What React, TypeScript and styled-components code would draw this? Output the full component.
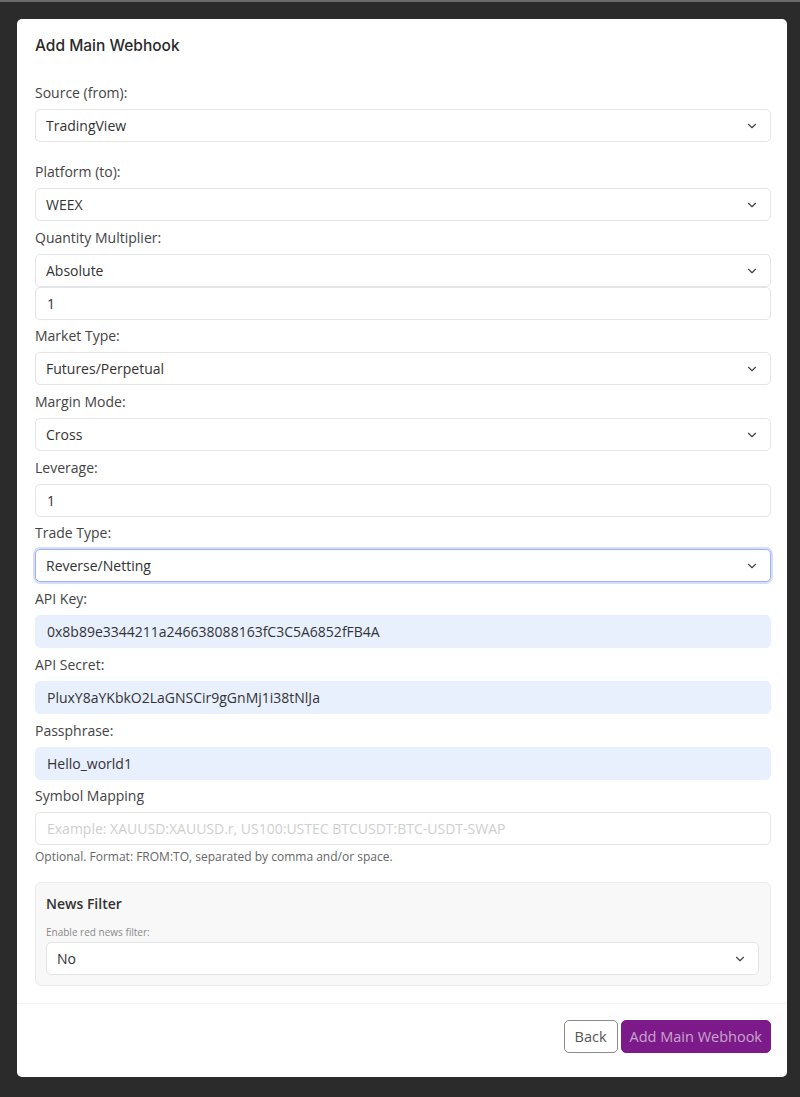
import React from 'react';
import styled, { createGlobalStyle, css } from 'styled-components';
import { ChevronDown } from 'lucide-react';

const GlobalStyle = createGlobalStyle`
    * {
        box-sizing: border-box;
    }

    body {
        margin: 0;
        background: #2b2b2b;
        font-family: "Open Sans", "Liberation Sans", sans-serif;
    }
`;

type Field = {
    label: string;
    kind: 'select' | 'input';
    value?: string;
    autofill?: boolean;
    focused?: boolean;
    extra?: string;
    spaced?: boolean;
};

const fields: Field[] = [
    { label: 'Source (from):', kind: 'select', value: 'TradingView', spaced: true },
    { label: 'Platform (to):', kind: 'select', value: 'WEEX' },
    { label: 'Quantity Multiplier:', kind: 'select', value: 'Absolute', extra: '1' },
    { label: 'Market Type:', kind: 'select', value: 'Futures/Perpetual' },
    { label: 'Margin Mode:', kind: 'select', value: 'Cross' },
    { label: 'Leverage:', kind: 'input', value: '1' },
    { label: 'Trade Type:', kind: 'select', value: 'Reverse/Netting', focused: true },
    { label: 'API Key:', kind: 'input', value: '0x8b89e3344211a246638088163fC3C5A6852fFB4A', autofill: true },
    { label: 'API Secret:', kind: 'input', value: 'PluxY8aYKbkO2LaGNSCir9gGnMj1i38tNlJa', autofill: true },
    { label: 'Passphrase:', kind: 'input', value: 'Hello_world1', autofill: true },
];

const SelectBox: React.FC<{ value: string; focused?: boolean }> = ({ value, focused }) => (
    <SelectWrap>
        <Select defaultValue={value} $focused={focused}>
            <option>{value}</option>
        </Select>
        <Chevron size={14} strokeWidth={2} />
    </SelectWrap>
);

const App: React.FC = () => {
    return (
        <Page>
            <GlobalStyle />
            <Card>
                <Header>
                    <Title>Add Main Webhook</Title>
                </Header>
                <Body>
                    {fields.map((f) => (
                        <Group key={f.label} $spaced={f.spaced}>
                            <Label>{f.label}</Label>
                            {f.kind === 'select' ? (
                                <SelectBox value={f.value || ''} focused={f.focused} />
                            ) : (
                                <Input defaultValue={f.value} $autofill={f.autofill} />
                            )}
                            {f.extra && <Input defaultValue={f.extra} />}
                        </Group>
                    ))}
                    <Group>
                        <Label>Symbol Mapping</Label>
                        <Input placeholder="Example: XAUUSD:XAUUSD.r, US100:USTEC BTCUSDT:BTC-USDT-SWAP" />
                        <Help>Optional. Format: FROM:TO, separated by comma and/or space.</Help>
                    </Group>
                    <FilterBox>
                        <FilterTitle>News Filter</FilterTitle>
                        <SmallLabel>Enable red news filter:</SmallLabel>
                        <SelectBox value="No" />
                    </FilterBox>
                </Body>
                <Footer>
                    <Button>Back</Button>
                    <Button $primary>Add Main Webhook</Button>
                </Footer>
            </Card>
        </Page>
    );
};

const Page = styled.div`
    min-height: 1097px;
    border-top: 2px solid #6b6b6b;
    padding: 17px 13px 19px 17px;
`;

const Card = styled.div`
    width: 770px;
    background: #fff;
    border-radius: 5px;
    overflow: hidden;
`;

const Header = styled.div`
    padding: 16px 18px 12px;
`;

const Title = styled.h5`
    margin: 0;
    font-family: Inter, "Open Sans", sans-serif;
    font-size: 15.5px;
    font-weight: 500;
    line-height: 22px;
    color: #2a2a2a;
`;

const Body = styled.div`
    padding: 13px 16px 17px 18px;
`;

const Group = styled.div<{ $spaced?: boolean }>`
    margin-bottom: ${(p) => (p.$spaced ? '19px' : '5.7px')};
`;

const Label = styled.label`
    display: block;
    font-size: 14px;
    line-height: 21px;
    color: #444;
    margin-bottom: 6px;
`;

const fieldBase = css`
    display: block;
    width: 100%;
    height: 33px;
    padding: 0 11px;
    font-family: "Open Sans", "Liberation Sans", sans-serif;
    font-size: 14px;
    color: #333;
    background: #fff;
    border: 1px solid #e4e4e6;
    border-radius: 5px;
    outline: none;
`;

const Input = styled.input<{ $autofill?: boolean }>`
    ${fieldBase}
    ${(p) =>
        p.$autofill &&
        css`
            background: #e8f0fe;
            border-color: #e8f0fe;
        `}

    &::placeholder {
        color: #cfcfcf;
    }
`;

const SelectWrap = styled.div`
    position: relative;
`;

const Select = styled.select<{ $focused?: boolean }>`
    ${fieldBase}
    appearance: none;
    padding-left: 10px;
    ${(p) =>
        p.$focused &&
        css`
            border-color: #9fb0f6;
            box-shadow: 0 0 0 2px rgba(140, 160, 245, 0.35);
        `}
`;

const Chevron = styled(ChevronDown)`
    position: absolute;
    right: 12px;
    top: 10px;
    color: #444;
    pointer-events: none;
`;

const Help = styled.div`
    margin-top: 3px;
    font-size: 12px;
    line-height: 18px;
    color: #666;
`;

const FilterBox = styled.div`
    margin-top: 16px;
    padding: 10px 11px 10px 10px;
    background: #f8f8f8;
    border: 1px solid #ececec;
    border-radius: 6px;
`;

const FilterTitle = styled.div`
    font-size: 14px;
    font-weight: 600;
    line-height: 21px;
    color: #333;
    margin-bottom: 11px;
`;

const SmallLabel = styled.div`
    font-size: 10px;
    line-height: 14px;
    color: #888;
    margin-bottom: 3px;
`;

const Footer = styled.div`
    display: flex;
    justify-content: flex-end;
    gap: 3px;
    padding: 16px 16px 24px;
    border-top: 1px solid #f2f2f2;
`;

const Button = styled.button<{ $primary?: boolean }>`
    height: 33px;
    padding: 0 ${(p) => (p.$primary ? '8px' : '10px')};
    font-family: "Open Sans", "Liberation Sans", sans-serif;
    font-size: 14.5px;
    border-radius: 5px;
    cursor: pointer;
    background: ${(p) => (p.$primary ? '#7c1a89' : '#fff')};
    color: ${(p) => (p.$primary ? '#c9a6cd' : '#555')};
    border: 1px solid ${(p) => (p.$primary ? '#7c1a89' : '#8a8a8a')};
`;

export default App;
